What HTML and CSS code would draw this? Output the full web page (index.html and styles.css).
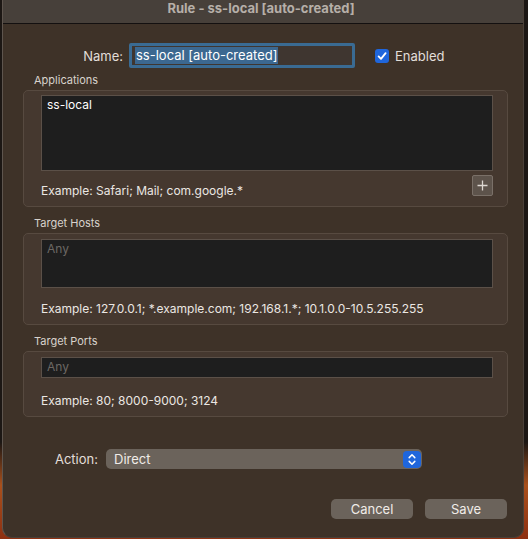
FILE: index.html
```html
<!DOCTYPE html>
<html>
<head>
<meta charset="utf-8">
<link rel="stylesheet" href="styles.css">
</head>
<body>
<div class="window">
  <div class="titlebar">Rule - ss-local [auto-created]</div>
  <div class="content">
    <div class="name-row">
      <label class="name-label">Name:</label>
      <div class="name-field"><span class="sel">ss-local [auto-created]</span></div>
      <div class="check">
        <span class="box"><svg width="14" height="14" viewBox="0 0 14 14"><path d="M3.6 7.4 L6 9.9 L10.6 4.1" stroke="#fff" stroke-width="1.8" fill="none" stroke-linecap="round" stroke-linejoin="round"/></svg></span>
        <span>Enabled</span>
      </div>
    </div>

    <div class="section-label">Applications</div>
    <div class="group g1">
      <div class="textarea apps"><span class="value">ss-local</span></div>
      <div class="g1-foot">
        <span class="example">Example: Safari; Mail; com.google.*</span>
        <button class="plus"><svg width="11" height="11" viewBox="0 0 11 11"><path d="M5.5 0.5v10M0.5 5.5h10" stroke="#ddd7d1" stroke-width="1.3"/></svg></button>
      </div>
    </div>

    <div class="section-label">Target Hosts</div>
    <div class="group g2">
      <div class="textarea hosts"><span class="placeholder">Any</span></div>
      <div class="example ex-hosts">Example: 127.0.0.1; *.example.com; 192.168.1.*; 10.1.0.0-10.5.255.255</div>
    </div>

    <div class="section-label">Target Ports</div>
    <div class="group g3">
      <div class="textarea ports"><span class="placeholder">Any</span></div>
      <div class="example ex-ports">Example: 80; 8000-9000; 3124</div>
    </div>

    <div class="action-row">
      <label class="action-label">Action:</label>
      <div class="popup">
        <span>Direct</span>
        <span class="stepper"><svg width="18" height="17" viewBox="0 0 18 17"><path d="M6.2 6.6 L9 3.8 L11.8 6.6 M6.2 10.4 L9 13.2 L11.8 10.4" stroke="#fff" stroke-width="1.5" fill="none" stroke-linecap="round" stroke-linejoin="round"/></svg></span>
      </div>
    </div>

    <div class="buttons">
      <button class="btn">Cancel</button>
      <button class="btn">Save</button>
    </div>
  </div>
</div>
</body>
</html>
```

FILE: styles.css
```css
html, body {
  margin: 0;
  padding: 0;
}
body {
  width: 528px;
  height: 539px;
  overflow: hidden;
  background: linear-gradient(#1c1714 0%, #1c1714 82%, #a8501c 90%, #8d3012 100%);
  font-family: Inter, "Noto Sans", "Liberation Sans", sans-serif;
}
.window {
  margin-left: 2px;
  width: 522px;
  height: 538px;
  box-sizing: border-box;
  background: #3e3228;
  border-left: 1px solid #5e554e;
  border-right: 1px solid #4a4038;
  border-bottom: 1px solid #4a4038;
  border-radius: 0 0 10px 10px;
  display: flex;
  flex-direction: column;
}
.titlebar {
  height: 23px;
  border-bottom: 1px solid #131010;
  background: #47403a;
  color: #b6afa8;
  font-weight: 700;
  font-size: 13px;
  line-height: 17px;
  text-align: center;
  padding-right: 4px;
}
.content {
  display: flex;
  flex-direction: column;
  padding-top: 19px;
}
.name-row {
  display: flex;
  align-items: center;
  height: 25px;
}
.name-label {
  width: 120px;
  text-align: right;
  margin-right: 6px;
  color: #e2ded9;
  font-size: 13px;
}
.name-field {
  width: 226px;
  height: 25px;
  box-sizing: border-box;
  border: 3px solid #3a6b93;
  border-radius: 2px;
  background: #3f3630;
  padding: 1px 3px;
  display: flex;
  align-items: center;
}
.sel {
  background: #3c6890;
  color: #ffffff;
  font-size: 13px;
  line-height: 17px;
  padding: 0 1px;
}
.check {
  margin-left: 20px;
  display: flex;
  align-items: center;
  gap: 6px;
  color: #e2ded9;
  font-size: 13px;
}
.box {
  width: 14px;
  height: 14px;
  border-radius: 3px;
  background: #1f66dc;
  display: flex;
}
.section-label {
  margin-top: 5px;
  margin-left: 31px;
  height: 14px;
  line-height: 14px;
  font-size: 11px;
  color: #d8d2cc;
  margin-bottom: 3px;
}
.group + .section-label {
  margin-top: 9px;
}
.group {
  margin-left: 20px;
  width: 485px;
  box-sizing: border-box;
  border: 1px solid #574a40;
  border-radius: 5px;
  background: #45382f;
  padding: 5px 14px 0 17px;
  display: flex;
  flex-direction: column;
}
.g1 {
  padding-top: 4px;
}
.textarea {
  box-sizing: border-box;
  background: #1e1e1e;
  border: 1px solid #5b5048;
  padding: 1px 5px 0;
  font-size: 12px;
  line-height: 15px;
}
.apps { height: 76px; }
.hosts { height: 49px; }
.ports { height: 21px; }
.value { color: #ffffff; }
.placeholder { color: #6c6864; }
.g1-foot {
  height: 35px;
  display: flex;
  justify-content: space-between;
  align-items: flex-end;
}
.example {
  font-size: 12px;
  line-height: 15px;
  color: #ebe7e3;
  padding-bottom: 8px;
}
.plus {
  align-self: flex-start;
  margin-top: 4px;
  width: 21px;
  height: 21px;
  padding: 0;
  box-sizing: border-box;
  background: #5d534b;
  border: 1px solid #7a7068;
  border-radius: 2px;
  display: flex;
  align-items: center;
  justify-content: center;
}
.ex-hosts { margin-top: 13px; }
.ex-ports { margin-top: 15px; }
.action-row {
  margin-top: 32px;
  display: flex;
  align-items: center;
  height: 20px;
}
.action-label {
  width: 95px;
  text-align: right;
  margin-right: 8px;
  color: #e2ded9;
  font-size: 13px;
}
.popup {
  width: 316px;
  height: 20px;
  box-sizing: border-box;
  background: #6b635b;
  border-radius: 5px;
  padding-left: 8px;
  padding-right: 1px;
  display: flex;
  align-items: center;
  justify-content: space-between;
  color: #f0ece8;
  font-size: 13px;
}
.stepper {
  width: 18px;
  height: 17px;
  border-radius: 4px;
  background: #1f66dc;
  display: flex;
}
.buttons {
  margin-top: 30px;
  display: flex;
  justify-content: flex-end;
  gap: 12px;
  padding-right: 16px;
}
.btn {
  width: 82px;
  height: 20px;
  padding: 0;
  border: none;
  border-radius: 5px;
  background: #6b635b;
  color: #f0ece8;
  font-family: Inter, "Noto Sans", "Liberation Sans", sans-serif;
  font-size: 13px;
  line-height: 20px;
}
```
